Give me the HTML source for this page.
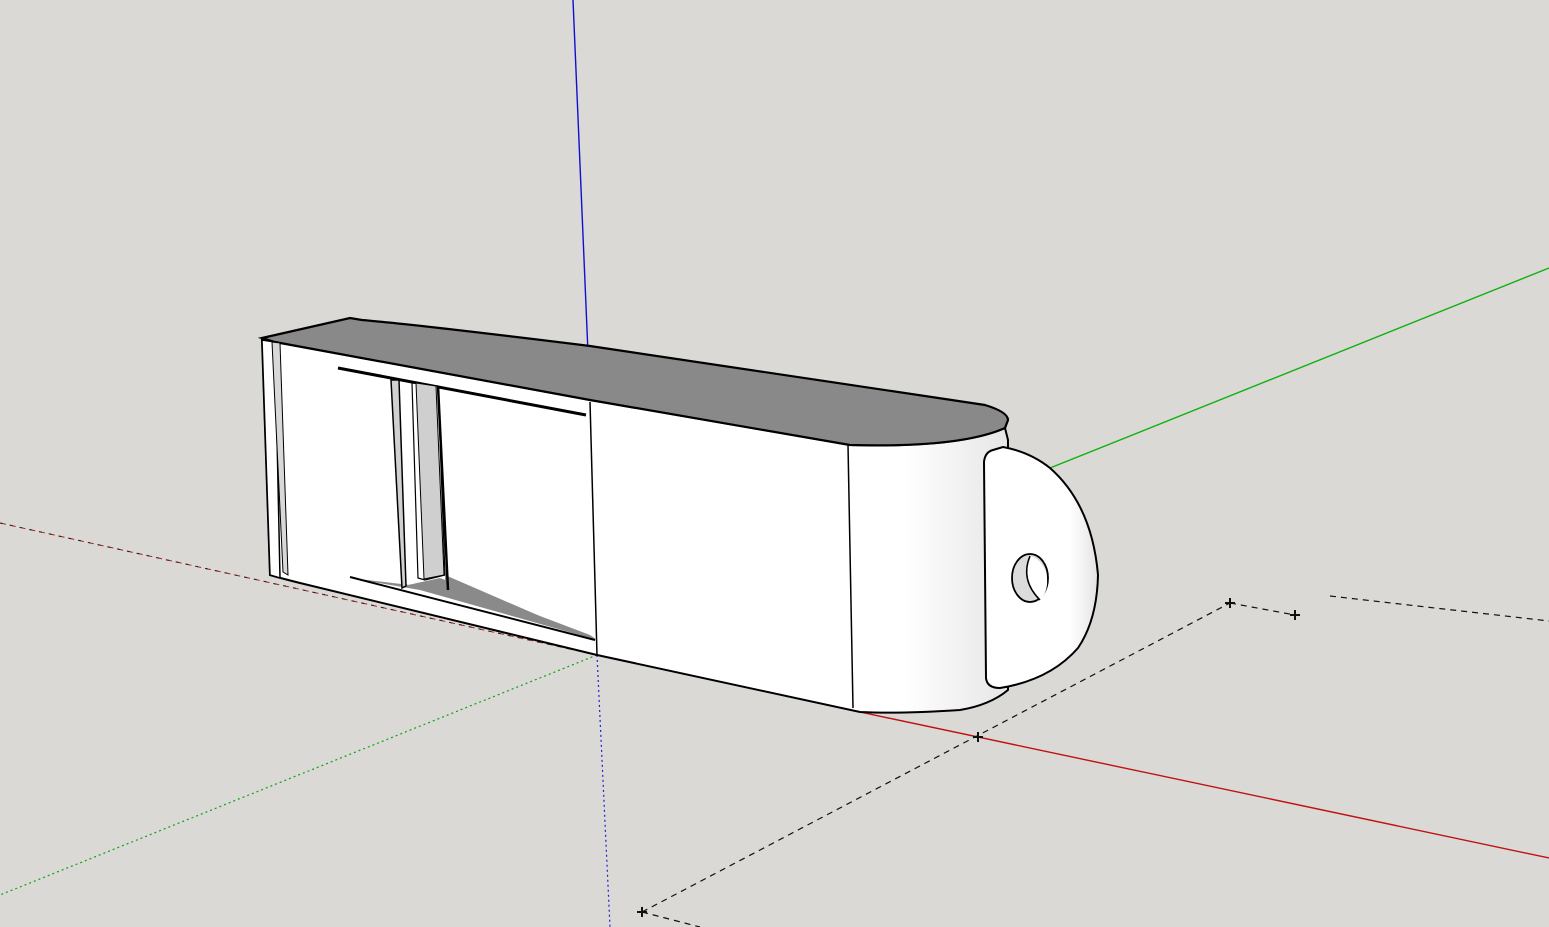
<!DOCTYPE html>
<html><head><meta charset="utf-8"><style>html,body{margin:0;padding:0;background:#dad9d5;overflow:hidden}svg{display:block}</style></head>
<body>
<svg width="1549" height="927" viewBox="0 0 1549 927" xmlns="http://www.w3.org/2000/svg">
<defs>
<linearGradient id="fr" x1="262" x2="1008" y1="0" y2="0" gradientUnits="userSpaceOnUse">
<stop offset="0" stop-color="#fff"/><stop offset="0.86" stop-color="#fff"/><stop offset="1" stop-color="#e6e6e6"/></linearGradient>
<linearGradient id="lf" x1="985" x2="1098" gradientUnits="userSpaceOnUse"><stop offset="0" stop-color="#fff"/><stop offset="0.75" stop-color="#fff"/><stop offset="1" stop-color="#e4e4e4"/></linearGradient>
<linearGradient id="lft" x1="262" x2="300" gradientUnits="userSpaceOnUse"><stop offset="0" stop-color="#fff"/><stop offset="1" stop-color="#f4f4f4"/></linearGradient>
</defs>
<rect width="1549" height="927" fill="#dad9d5"/>
<line x1="0" y1="523" x2="597" y2="655" stroke="#b02020" stroke-width="1" stroke-dasharray="6,4"/>
<line x1="0" y1="523" x2="597" y2="655" stroke="#222" stroke-width="1" stroke-dasharray="3,7"/>
<line x1="597" y1="655" x2="0" y2="895" stroke="#10a010" stroke-width="1.2" stroke-dasharray="2,3"/>
<line x1="597" y1="655" x2="610" y2="927" stroke="#2020d0" stroke-width="1.2" stroke-dasharray="2,3"/>
<line x1="860" y1="712" x2="1549" y2="858" stroke="#c01010" stroke-width="1.4"/>
<line x1="1040" y1="472" x2="1549" y2="268" stroke="#10b010" stroke-width="1.4"/>
<line x1="573" y1="0" x2="590" y2="400" stroke="#1010d0" stroke-width="1.4"/>
<g stroke="#111" stroke-width="1.2" stroke-dasharray="6,5" fill="none">
<line x1="642" y1="912" x2="1230" y2="603"/>
<line x1="1230" y1="603" x2="1295" y2="615"/>
<line x1="1330" y1="596" x2="1549" y2="621"/>
<line x1="642" y1="912" x2="700" y2="927"/>
</g>
<g stroke="#111" stroke-width="2">
<path d="M637 912h10M642 907v10M973 737h10M978 732v10M1225 603h10M1230 598v10M1290 615h10M1295 610v10"/>
</g>
<path d="M262 340 L275 342 L590 400 L850 445 Q960 448 1005 428 L1008 440 L1008 690 Q990 705 960 710 Q900 714 860 712 L597 655 L300 583 Q280 578 270 575 Z" fill="url(#fr)" stroke="#000" stroke-width="2"/>
<path d="M262 338 L350 318 L362 320 Q420 325 590 346 L985 405 Q1008 412 1008 420 L1005 428 Q960 448 850 445 L590 400 L275 342 Z" fill="#898989" stroke="#000" stroke-width="2.2"/>
<path d="M262 340 L270 575 L280 578 L275 342 Z" fill="#fff" stroke="#000" stroke-width="1.5"/>
<path d="M272 342 L283 572 L288 575 L280 343 Z" fill="#d8d8d8" stroke="#000" stroke-width="1"/>
<line x1="590" y1="402" x2="597" y2="655" stroke="#000" stroke-width="1.5"/>
<line x1="848" y1="445" x2="853" y2="708" stroke="#000" stroke-width="1.5"/>
<line x1="338" y1="368" x2="586" y2="415" stroke="#000" stroke-width="3"/>
<path d="M350 578 L410 585 L408 585 L440 578 L590 635 L597 640 L420 590 Z" fill="#8a8a8a"/>
<path d="M445 575 L445 590 L595 640 Z" fill="#8a8a8a"/>
<line x1="350" y1="577" x2="595" y2="640" stroke="#000" stroke-width="2"/>
<path d="M391 380 L399 380 L406 586 L402 588 Z" fill="#d0d0d0" stroke="#000" stroke-width="1.5"/>
<path d="M412 383 L438 386 L445 575 L425 580 L418 578 Z" fill="#fff" stroke="#000" stroke-width="1.2"/>
<path d="M416 383 L436 386 L444 575 L424 579 Z" fill="#cfcfcf" stroke="#000" stroke-width="1"/>
<line x1="438" y1="386" x2="448" y2="590" stroke="#000" stroke-width="2.5"/>
<path d="M993 450 L1003 447 Q1030 452 1050 468 Q1092 505 1098 575 Q1097 620 1078 648 Q1050 680 1000 688 Q987 688 986 678 L984 462 Q985 452 993 450 Z" fill="url(#lf)" stroke="#000" stroke-width="2"/>
<ellipse cx="1030" cy="578" rx="18" ry="24" fill="#dcdcdc" stroke="#000" stroke-width="1.8"/>
<path d="M1030 556 Q1020 580 1040 600 Q1050 590 1046 572 Q1040 558 1030 556 Z" fill="#fff"/>
<path d="M1030 556 Q1020 580 1040 600" fill="none" stroke="#000" stroke-width="1.5"/>
</svg>
</body></html>
